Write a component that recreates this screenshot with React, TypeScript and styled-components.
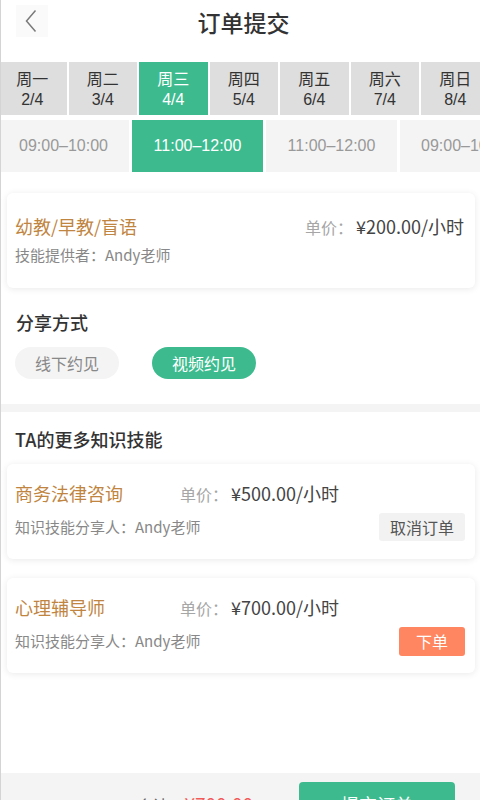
import styled, { createGlobalStyle } from 'styled-components';

const GlobalStyle = createGlobalStyle`
  body {
    margin: 0;
    background: #fff;
    font-family: "Noto Sans CJK SC", "Noto Sans", sans-serif;
    color: #333;
  }
`;

const days = [
  { name: '周一', date: '2/4' },
  { name: '周二', date: '3/4' },
  { name: '周三', date: '4/4' },
  { name: '周四', date: '5/4' },
  { name: '周五', date: '6/4' },
  { name: '周六', date: '7/4' },
  { name: '周日', date: '8/4' },
];

const slots = ['09:00–10:00', '11:00–12:00', '11:00–12:00', '09:00–10:00'];

const skills = [
  { title: '商务法律咨询', price: '¥500.00/小时', action: '取消订单', primary: false },
  { title: '心理辅导师', price: '¥700.00/小时', action: '下单', primary: true },
];

const App = () => {
  return (
    <Page>
      <GlobalStyle />
      <Header>
        <BackButton aria-label="back">
          <svg width="12" height="24" viewBox="0 0 12 24">
            <path d="M10.5 1.5 L1.5 12 L10.5 22.5" fill="none" stroke="#7a7a7a" strokeWidth="1.5" />
          </svg>
        </BackButton>
        <Title>订单提交</Title>
      </Header>

      <DayRow>
        {days.map((d, i) => (
          <DayTab key={d.name} $active={i === 2}>
            <span>{d.name}</span>
            <span>{d.date}</span>
          </DayTab>
        ))}
      </DayRow>

      <SlotRow>
        {slots.map((s, i) => (
          <Slot key={i} $active={i === 1}>{s}</Slot>
        ))}
      </SlotRow>

      <MainCard>
        <CardTop>
          <SkillName>幼教/早教/盲语</SkillName>
          <Price $right>
            <em>单价：</em>¥200.00/小时
          </Price>
        </CardTop>
        <Meta>技能提供者：Andy老师</Meta>
      </MainCard>

      <Section>
        <SectionTitle>分享方式</SectionTitle>
        <Pills>
          <Pill>线下约见</Pill>
          <Pill $active>视频约见</Pill>
        </Pills>
      </Section>

      <Divider />

      <SectionTitle $more>TA的更多知识技能</SectionTitle>

      {skills.map((s) => (
        <SkillCard key={s.title}>
          <CardTop>
            <SkillName $fixed>{s.title}</SkillName>
            <Price>
              <em>单价：</em>{s.price}
            </Price>
          </CardTop>
          <CardBottom>
            <Meta>知识技能分享人：Andy老师</Meta>
            <ActionButton $primary={s.primary}>{s.action}</ActionButton>
          </CardBottom>
        </SkillCard>
      ))}

      <BottomBar>
        <Total>
          合计：<strong>¥700.00</strong>
        </Total>
        <SubmitButton>提交订单</SubmitButton>
      </BottomBar>
    </Page>
  );
};

const Page = styled.div`
  width: 479px;
  height: 800px;
  overflow: hidden;
  border-left: 1px solid #d4d4d4;
  background: #fff;
`;

const Header = styled.header`
  height: 44px;
  display: flex;
  align-items: center;
  position: relative;
  margin-bottom: 18px;
`;

const BackButton = styled.div`
  position: absolute;
  left: 15px;
  top: 5px;
  width: 32px;
  height: 32px;
  background: #fafafa;
  display: flex;
  align-items: center;
  justify-content: center;
  padding-right: 2px;
  box-sizing: border-box;
`;

const Title = styled.h1`
  margin: 0;
  width: 100%;
  text-align: center;
  font-size: 23px;
  line-height: 44px;
  font-weight: 500;
  color: #333;
  padding-left: 6px;
  box-sizing: border-box;
`;

const DayRow = styled.div`
  display: flex;
  gap: 2px;
  margin-left: -3px;
  height: 53px;
`;

const DayTab = styled.div<{ $active?: boolean }>`
  flex: 0 0 68.5px;
  display: flex;
  flex-direction: column;
  align-items: center;
  justify-content: center;
  background: ${({ $active }) => ($active ? '#3dbb8f' : '#dedede')};
  color: ${({ $active }) => ($active ? '#fff' : '#333')};
  font-size: 16px;
  line-height: 21px;

  span:last-child {
    font-family: "Liberation Sans", "Noto Sans CJK SC", sans-serif;
    font-size: 16px;
    line-height: 21px;
  }
`;

const SlotRow = styled.div`
  display: flex;
  gap: 3px;
  margin-top: 5px;
  margin-left: -3px;
  height: 52px;
`;

const Slot = styled.div<{ $active?: boolean }>`
  flex: 0 0 131px;
  display: flex;
  align-items: center;
  justify-content: center;
  background: ${({ $active }) => ($active ? '#3dbb8f' : '#f4f4f4')};
  color: ${({ $active }) => ($active ? '#fff' : '#999')};
  font-size: 16px;
  font-family: "Liberation Sans", "Noto Sans CJK SC", sans-serif;
`;

const Card = styled.div`
  margin: 0 5px 0 6px;
  height: 95px;
  background: #fff;
  border-radius: 6px;
  box-shadow: 0 1px 7px rgba(0, 0, 0, 0.09);
  padding: 0 10px 0 8px;
  box-sizing: border-box;
`;

const MainCard = styled(Card)`
  margin-top: 21px;
  padding-top: 22px;
`;

const SkillCard = styled(Card)`
  padding-top: 18px;
  margin-bottom: 19px;
`;

const CardTop = styled.div`
  display: flex;
  align-items: center;
  height: 22px;
`;

const SkillName = styled.div<{ $fixed?: boolean }>`
  color: #bf8541;
  font-size: 18px;
  line-height: 22px;
  ${({ $fixed }) => ($fixed ? 'width: 165px; flex: none;' : '')}
`;

const Price = styled.div<{ $right?: boolean }>`
  font-size: 18px;
  line-height: 22px;
  color: #444;
  margin-left: ${({ $right }) => ($right ? 'auto' : '0')};
  margin-right: ${({ $right }) => ($right ? '1px' : '0')};

  em {
    font-style: normal;
    font-size: 16px;
    color: #a6a6a6;
    margin-right: 3px;
  }
`;

const Meta = styled.div`
  font-size: 15px;
  line-height: 20px;
  color: #888;
  margin-top: 8px;
`;

const CardBottom = styled.div`
  display: flex;
  align-items: center;
  justify-content: space-between;
  height: 28px;
  margin-top: 9px;

  ${Meta} {
    margin-top: 0;
  }
`;

const ActionButton = styled.div<{ $primary?: boolean }>`
  height: ${({ $primary }) => ($primary ? '29px' : '28px')};
  padding: 0 ${({ $primary }) => ($primary ? '17px' : '11px')};
  display: flex;
  align-items: center;
  border-radius: 3px;
  font-size: 16px;
  background: ${({ $primary }) => ($primary ? '#ff8660' : '#f2f2f2')};
  color: ${({ $primary }) => ($primary ? '#fff' : '#555')};
`;

const Section = styled.section`
  padding: 0 14px;
  margin-top: 22px;
`;

const SectionTitle = styled.h2<{ $more?: boolean }>`
  margin: 0;
  font-size: 18px;
  line-height: 24px;
  font-weight: 500;
  color: #333;
  ${({ $more }) => ($more ? 'padding: 15px 14px 13px;' : 'padding-left: 1px;')}
`;

const Pills = styled.div`
  display: flex;
  gap: 33px;
  margin-top: 13px;
`;

const Pill = styled.div<{ $active?: boolean }>`
  width: 104px;
  height: 32px;
  border-radius: 16px;
  display: flex;
  align-items: center;
  justify-content: center;
  font-size: 16px;
  background: ${({ $active }) => ($active ? '#3dbb8f' : '#f4f4f4')};
  color: ${({ $active }) => ($active ? '#fff' : '#888')};
`;

const Divider = styled.div`
  height: 8px;
  background: #f4f4f4;
  margin-top: 25px;
`;

const BottomBar = styled.footer`
  margin-top: 100px;
  height: 60px;
  background: #f4f4f4;
  display: flex;
  align-items: flex-start;
  justify-content: flex-end;
  gap: 46px;
  padding: 9px 25px 0 0;
  box-sizing: border-box;
`;

const Total = styled.div`
  font-size: 16px;
  line-height: 44px;
  color: #666;

  strong {
    font-weight: 400;
    font-size: 19px;
    color: #f25a5a;
  }
`;

const SubmitButton = styled.div`
  width: 156px;
  height: 44px;
  border-radius: 4px;
  background: #3dbb8f;
  color: #fff;
  font-size: 18px;
  display: flex;
  align-items: center;
  justify-content: center;
`;

export default App;
